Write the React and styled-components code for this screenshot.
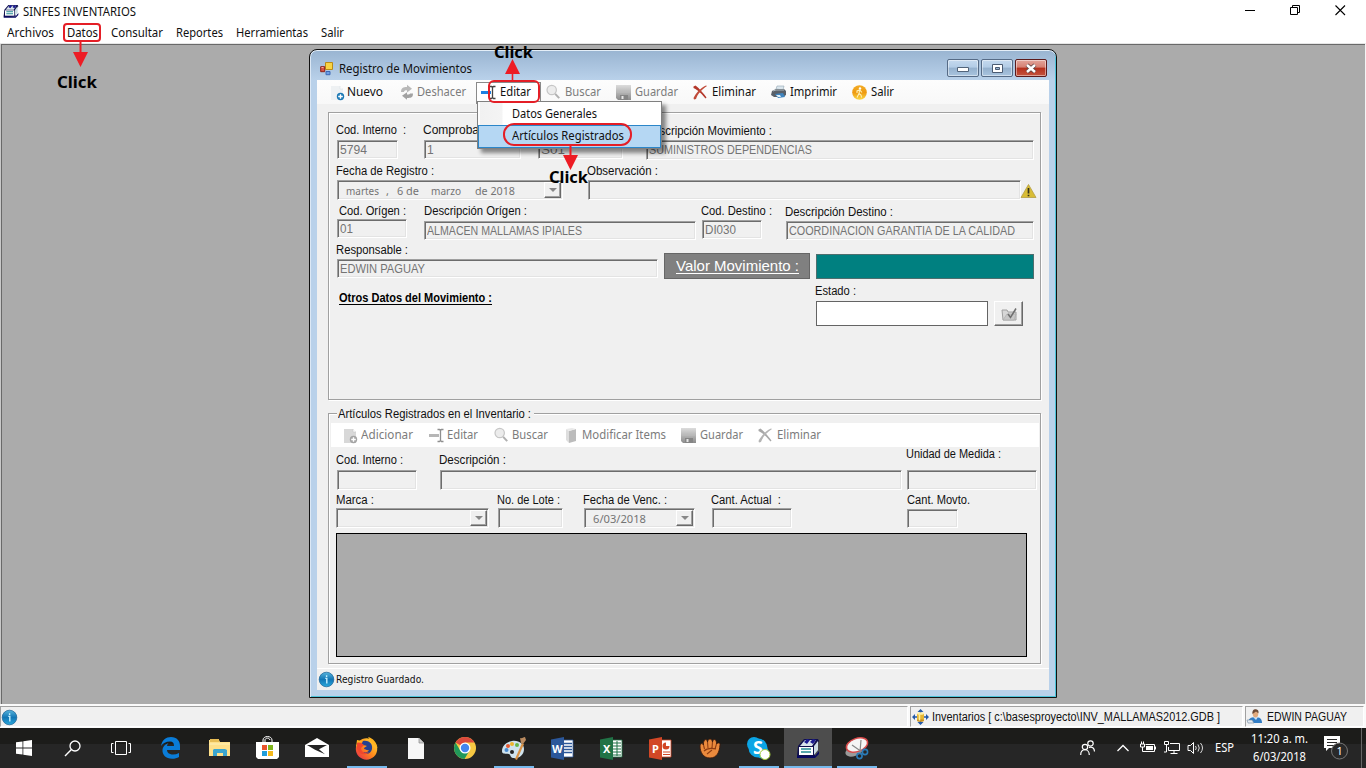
import React, { useLayoutEffect, useRef } from "react";
import styled, { createGlobalStyle, css } from "styled-components";

const GlobalStyle = createGlobalStyle`
  * { box-sizing: border-box; }
  body { margin: 0; overflow: hidden; }
`;

const sans = `"Liberation Sans", Arial, sans-serif`;
const segoe = `"Noto Sans", "Open Sans", sans-serif`;

/* ---------- text ---------- */

const TextSpan = styled.span`
  display: inline-block;
  flex: none;
  align-self: flex-start;
  white-space: pre;
  transform-origin: 0 50%;
`;

/* Condenses or widens the glyphs so the string takes exactly `w` pixels. */
function Text({ w, children }) {
  const ref = useRef(null);
  useLayoutEffect(() => {
    const el = ref.current;
    if (!w || !children) return;
    el.style.transform = "none";
    const natural = el.getBoundingClientRect().width;
    el.style.transform = `scaleX(${((w + 1) / natural).toFixed(4)})`;
    el.style.marginRight = `${(w + 1 - natural).toFixed(3)}px`;
  }, [w, children]);
  return <TextSpan ref={ref}>{children}</TextSpan>;
}

/* ---------- application frame ---------- */

const Desktop = styled.div`
  width: 1366px;
  height: 768px;
  display: flex;
  flex-direction: column;
  position: relative;
  overflow: hidden;
  background: #fff;
  color: #111;
  font: 12px/16px ${segoe};
`;

const TitleBar = styled.header`
  height: 23px;
  display: flex;
  padding: 4px 20px 0 3px;
  justify-content: space-between;
`;

const TitleGroup = styled.div`
  display: flex;
  gap: ${(p) => p.$gap}px;
`;

const MenuBar = styled.nav`
  height: 20px;
  display: flex;
  gap: 13px;
  padding: 2px 0 0 7px;
`;

const Workspace = styled.main`
  height: 661px;
  border-top: 1px solid #e6e6e6;
  border-right: 1px solid #f4f4f4;
  background: #ababab;
  box-shadow: inset 1px 0 #c8c8c8, inset 2px 1px #696969;
  position: relative;
`;

const StatusBar = styled.footer`
  height: 24px;
  display: flex;
  gap: 2px;
  padding-top: 2px;
  background: #fafafa;
`;

const StatusCell = styled.div`
  display: flex;
  gap: ${(p) => p.$gap || 3}px;
  width: ${(p) => p.$w}px;
  height: 21px;
  padding: 2px 0 0 1px;
  border: 1px solid #a0a0a0;
  border-color: #a0a0a0 #fff #fff #a0a0a0;
  background: #f0f0f0;
  font: 12px/17px ${sans};
`;

/* ---------- child window ---------- */

const ChildWindow = styled.section`
  position: absolute;
  left: 309px;
  top: 5px;
  width: 748px;
  height: 649px;
  padding: 0 7px 7px;
  border: 1px solid #111;
  border-radius: 8px 8px 0 0;
  background: linear-gradient(#99b4d1, #b9d1ea 30px);
  box-shadow: inset 0 1px #e4eef8, inset 1px 0 #dce8f5, inset -1px -1px #4cc3d9;
`;

const WindowTitle = styled.div`
  height: 30px;
  display: flex;
  padding: 7px 2px 0 3px;
  line-height: 24px;
  gap: 5px;
`;

const WindowButtons = styled.div`
  display: flex;
  gap: 2px;
  margin-left: auto;
  padding-top: 2px;
`;

const WindowButton = styled.button`
  width: 32px;
  height: 18px;
  padding: 0;
  display: grid;
  place-items: center;
  border: 1px solid ${(p) => (p.$close ? "#5b1a1c" : "#566b86")};
  border-radius: 2px;
  background: ${(p) =>
    p.$close
      ? "linear-gradient(#e3a59b, #d58073 45%, #b52f1c 50%, #c4543f)"
      : "linear-gradient(#c5d9ee, #b3cce6 45%, #94b0cd 50%, #a9c4df)"};
  box-shadow: inset 0 0 0 1px rgba(255, 255, 255, 0.45);
`;

const Client = styled.div`
  height: 610px;
  display: flex;
  flex-direction: column;
  background: #f0f0f0;
`;

const Toolbar = styled.div`
  height: 24px;
  display: flex;
  padding-left: ${(p) => p.$pad}px;
  background: ${(p) => (p.$white ? "#fff" : "linear-gradient(#fdfdfd, #f8f8f8)")};
  margin: ${(p) => p.$margin || "0"};
  font: 12px/16px ${segoe};
`;

const Tool = styled.div`
  display: flex;
  width: ${(p) => p.$w}px;
  height: 24px;
  padding-top: 4px;
  gap: ${(p) => p.$gap ?? 3}px;
  color: ${(p) => (p.$off ? "#7c7c7c" : "#111")};
  line-height: 16px;
  ${(p) =>
    p.$open &&
    css`
      height: 22px;
      margin-top: 2px;
      padding: 1px 0 0 4px;
      background: #fff;
      border: 1px solid #8a8a8a;
      border-bottom: 0;
    `}
`;

const GroupPanel = styled.div`
  margin: ${(p) => p.$margin};
  padding: ${(p) => p.$padding};
  height: ${(p) => p.$h}px;
  min-width: 0;
  border: 1px solid #a0a0a0;
  box-shadow: 1px 1px #fff, inset 1px 1px #fff;
  font: 12px/14px ${sans};
`;

const LegendRow = styled.div`
  height: 14px;
  margin-top: -7px;
  padding-left: 8px;
`;

const Legend = styled.div`
  display: inline-block;
  width: 197px;
  height: 14px;
  background: #f0f0f0;
  padding-left: 1px;
`;

const Row = styled.div`
  display: flex;
  align-items: flex-start;
  height: ${(p) => p.$h}px;
  padding-left: ${(p) => p.$pad || 0}px;
`;

const FieldBox = styled.label`
  display: flex;
  flex-direction: column;
  flex: none;
  width: ${(p) => p.$w}px;
  margin: ${(p) => p.$top || 0}px 0 0 ${(p) => p.$left || 0}px;
`;

const FieldLabel = styled.span`
  display: flex;
  height: 14px;
  margin-left: ${(p) => p.$shift}px;
`;

const UnitLabel = styled(FieldLabel).attrs({ $shift: -1 })`
  margin-top: -6px;
`;

const Sunken = styled.div`
  display: flex;
  height: ${(p) => p.$h || 19}px;
  margin-top: ${(p) => p.$gap}px;
  padding: 1px 0 0 2px;
  border: 1px solid;
  border-color: #a0a0a0 #fff #fff #a0a0a0;
  box-shadow: inset 1px 1px #6c6c6c, inset -1px -1px #e3e3e3;
  background: #f0f0f0;
  color: #747474;
  line-height: 17px;
`;

const DropButton = styled.span`
  display: grid;
  place-items: center;
  width: 17px;
  height: calc(100% - 1px);
  margin: 0 1px 0 auto;
  border: 1px solid;
  border-color: #fff #696969 #696969 #fff;
  box-shadow: inset -1px -1px #a0a0a0;
`;

const DropArrow = styled.i`
  border: 4px solid transparent;
  border-top-color: #888;
  border-bottom: 0;
`;

const DateParts = styled.div`
  display: flex;
  padding-left: 6px;
  font: 11px/18px ${segoe};
`;

const DatePart = styled.span`
  display: flex;
  width: ${(p) => p.$w}px;
`;

const WarningHolder = styled.div`
  margin-top: 20px;
`;

const AmountLabel = styled.div`
  display: flex;
  width: 146px;
  height: 26px;
  margin: 10px 6px 0;
  padding-left: 11px;
  background: #808080;
  border: 1px solid #666;
  color: #fff;
  font: 15px/23px ${sans};
`;

const Underlined = styled.span`
  display: flex;
  height: ${(p) => p.$h}px;
  border-bottom: 1px solid;
`;

const AmountValue = styled.div`
  width: 218px;
  height: 25px;
  margin-top: 11px;
  background: #008080;
  border: 1px solid #4e6e6e;
`;

const SectionTitle = styled.div`
  display: flex;
  width: 479px;
  padding: 7px 0 0 2px;
  font-weight: bold;
  color: #000;
`;

const StateInput = styled.div`
  width: 172px;
  height: 25px;
  margin-top: 3px;
  background: #fff;
  border: 1px solid #646464;
`;

const StateButton = styled.button`
  width: 29px;
  height: 25px;
  margin: 17px 0 0 6px;
  padding: 2px 0 0 2px;
  border: 1px solid;
  border-color: #fff #696969 #696969 #fff;
  box-shadow: inset -1px -1px #a0a0a0;
  background: #f0f0f0;
  display: grid;
  place-items: center;
`;

const Grid = styled.div`
  width: 691px;
  height: 124px;
  margin-left: 7px;
  background: #ababab;
  border: 1px solid #000;
`;

const WindowStatus = styled.div`
  display: flex;
  gap: 2px;
  height: 22px;
  margin-top: auto;
  padding: 2px 0 0 2px;
  border-top: 1px solid #fff;
  font: 10px/18px "DejaVu Sans", sans-serif;
`;

/* ---------- drop-down and callouts, both lie over the form ---------- */

const DropMenu = styled.div`
  position: absolute;
  left: 477px;
  top: 101px;
  width: 185px;
  height: 48px;
  padding: 1px 0 0;
  border: 1px solid #808080;
  background: linear-gradient(90deg, #fcfcfc 2px, #f1f1f1 2px, #f4f4f4 24px, #fff 25px);
  box-shadow: 4px 4px 4px rgba(0, 0, 0, 0.45);
`;

const DropItem = styled.div`
  display: flex;
  height: 22px;
  padding: 3px 0 0 34px;
  ${(p) =>
    p.$active &&
    css`
      height: 23px;
      background: #b5d7f3;
      border: 1px solid #2b86c9;
      padding: 2px 0 0 33px;
    `}
`;

const Highlight = styled.div`
  position: absolute;
  left: ${(p) => p.$x}px;
  top: ${(p) => p.$y}px;
  width: ${(p) => p.$w}px;
  height: ${(p) => p.$h}px;
  border: 2px solid #e41e26;
  border-radius: ${(p) => p.$r}px;
`;

const Arrow = styled.svg`
  position: absolute;
  left: ${(p) => p.$x}px;
  top: ${(p) => p.$y}px;
  fill: #ed1c24;
`;

const ClickLabel = styled.div`
  position: absolute;
  left: ${(p) => p.$x}px;
  top: ${(p) => p.$y}px;
  display: flex;
  font: bold 16px/20px ${segoe};
  color: #000;
`;

/* ---------- taskbar ---------- */

const Taskbar = styled.footer`
  height: 40px;
  display: flex;
  background: linear-gradient(#1c1c1a 16px, #262626 16px);
  color: #fff;
`;

const Task = styled.div`
  width: ${(p) => p.$w || 49}px;
  height: 40px;
  margin-left: ${(p) => (p.$active ? 1 : 0)}px;
  display: grid;
  place-items: center;
  position: relative;
  background: ${(p) => (p.$active ? "#4d4d4d" : "transparent")};
  &::after {
    content: "";
    display: ${(p) => (p.$open || p.$active ? "block" : "none")};
    position: absolute;
    bottom: 0;
    left: ${(p) => (p.$active ? 0 : 5)}px;
    right: ${(p) => (p.$active ? 0 : 4)}px;
    height: 2px;
    background: #76b9ed;
  }
`;

const Tray = styled.div`
  display: flex;
  margin-left: auto;
  height: 40px;
  border-right: 1px solid #666;
  margin-right: 4px;
  align-items: center;
`;

const TrayIcon = styled.div`
  width: ${(p) => p.$w}px;
  display: flex;
  flex: none;
`;

const Clock = styled.div`
  width: 73px;
  display: flex;
  flex-direction: column;
  line-height: 18px;
`;

const ClockLine = styled.div`
  display: flex;
  padding-left: ${(p) => p.$pad || 0}px;
`;

const Svg = styled.svg`
  display: block;
  flex: none;
  overflow: visible;
  margin-top: ${(p) => p.$mt || 0}px;
`;

/* ---------- icons ---------- */

const Icon = ({ w = 16, h = 16, mt, children }) => (
  <Svg width={w} height={h} viewBox={`0 0 ${w} ${h}`} $mt={mt} fill="none">{children}</Svg>
);

const AppIcon = ({ w = 16, h = 16 }) => (
  <Svg width={w} height={h} viewBox="0 0 24 20" fill="none">
    <path d="M1 17 19 18 23 13v3l-4 4H1z" fill="#090963" />
    <path d="M2 8 8 1h14l1 2-4 6v9H1z" fill="#10104e" />
    <path d="M4 8 9 2h11l-4 6z" fill="#d9e5ec" />
    <path d="m8 4 3-3 3 1-3 4zm6 0 3-3 3 1-3 4z" fill="#1b1b91" />
    <path d="M3 9h14v8H3z" fill="#fff" />
    <path d="m18 8 4-5v9l-4 5z" fill="#cbdce3" />
    <path d="M5 11h10M5 14h10" stroke="#238b93" strokeWidth="1.6" />
  </Svg>
);

const InfoIcon = () => (
  <Icon w={15} h={15} mt={1}>
    <defs>
      <linearGradient id="info" x2="0" y2="1"><stop stopColor="#57b4dc" /><stop offset=".5" stopColor="#1276b5" /><stop offset="1" stopColor="#2aa9dc" /></linearGradient>
    </defs>
    <circle cx="7.5" cy="7.5" r="7.3" fill="url(#info)" stroke="#155d92" strokeWidth=".7" />
    <path d="M6.3 6.4h1.5v5M7.6 3.3v1.6" stroke="#c5f0ff" strokeWidth="1.4" />
  </Icon>
);

const FormIcon = () => (
  <Icon w={14} h={14} mt={5}>
    <path d="M5.5.5h7v7h-7z" fill="#f8d444" stroke="#ba8b17" />
    <path d="M.7 4.7h4v5h-4z" fill="#d85446" stroke="#8d2218" />
    <path d="M6 9.5h4v3.2H6z" fill="#6d9fe8" stroke="#3d68b5" />
    <path d="M1.5 5.5h2" stroke="#f7aaa0" />
  </Icon>
);

const NewIcon = ({ off }) => (
  <Icon w={15} h={16} mt={1}>
    <path d="M1 1h9l3 3v11H1z" fill={off ? "#d8d8d8" : "#eef1f3"} />
    <path d="M10 1v3h3" fill="#fff" stroke={off ? "#ccc" : "#dde3e8"} strokeWidth=".7" />
    <circle cx="10.5" cy="11.5" r="3.7" fill={off ? "#a4a4a4" : "#1c79b5"} />
    <path d="M10.5 9.2v4.6M8.2 11.5h4.6" stroke="#fff" strokeWidth="1.4" />
  </Icon>
);

const UndoIcon = () => (
  <Icon w={14} h={16}>
    <path d="M1 8c0-4 2-5 6-5V.8l5 4L7 8.500V6.300C4.500 6.300 4.300 6.800 4 8z" fill="#b9b9b9" />
    <path d="M13 9.500c0 4-2 4.500-6 4.500v1.800l-5-4 5-3.500v2.200c2.500 0 2.700-.2 3-1z" fill="#a2a2a2" />
  </Icon>
);

const EditIcon = ({ off }) => (
  <Icon w={16} h={16}>
    <path d="M0 7h10v3H0z" fill={off ? "#b6b6b6" : "#1d80e2"} />
    <path d="M8.500 2.500h2l1 1 1-1h2M8.500 14.500h2l1-1 1 1h2M11.500 3v11" stroke={off ? "#8f8f8f" : "#444"} strokeWidth="1.3" />
  </Icon>
);

const SearchIcon = () => (
  <Icon w={15} h={16}>
    <circle cx="5.700" cy="6" r="4.700" fill="#ececec" stroke="#c6c6c6" strokeWidth="1.200" />
    <path d="m9.200 9.800 4 4.400" stroke="#b0b0b0" strokeWidth="2" />
  </Icon>
);

const SaveIcon = () => (
  <Icon w={16} h={16} mt={1}>
    <defs><linearGradient id="save" x2="0" y2="1"><stop stopColor="#dcdcdc" /><stop offset="1" stopColor="#8c8c8c" /></linearGradient></defs>
    <path d="M0 0h15v15H2l-2-2z" fill="url(#save)" />
    <path d="M4 10h8v5H4z" fill="#858585" />
    <path d="M5.500 11h2v3h-2z" fill="#e6e6e6" />
    <path d="M1 7h13" stroke="#bcbcbc" />
  </Icon>
);

const DeleteIcon = ({ off }) => (
  <Icon w={16} h={16} mt={1}>
    <path d="M.5 1.500 2.500.5c4 3 8 8 11 12l-1 1C9 9.500 6 5.500.5 3z" fill={off ? "#a8a8a8" : "#b4382b"} />
    <path d="M14 1C9 4.500 4.500 9 3 14l-2 .5-.5-1.500C3 8 7.500 3 13 .5z" fill={off ? "#b4b4b4" : "#c04a39"} />
  </Icon>
);

const PrintIcon = () => (
  <Icon w={16} h={16}>
    <path d="m5 5 1-3h7l-1 4z" fill="#dbe6ed" stroke="#92a6b2" strokeWidth=".6" />
    <path d="m1 7 4-2h8l2 2v4l-3 2H3l-3-2z" fill="#596069" />
    <path d="m2 7 3-1h8" stroke="#aeb8be" />
    <path d="m4 10 8-1 2 4-7 1z" fill="#3f85c0" />
    <path d="m5 11 4 0 1 2-3 0z" fill="#e1f0f8" />
  </Icon>
);

const ExitIcon = () => (
  <Icon w={16} h={16}>
    <defs><linearGradient id="exit" x2="0" y2="1"><stop stopColor="#f3ad28" /><stop offset=".5" stopColor="#ee9a10" /><stop offset="1" stopColor="#fbd844" /></linearGradient></defs>
    <circle cx="7.500" cy="8.500" r="7.300" fill="url(#exit)" />
    <circle cx="8" cy="4.500" r="1.200" fill="#fff" />
    <path d="M7.700 6 7 9.500l2 1.500.5 2.500M7 9.500l-2 4M5 9V7l2.700-1L10 8.500" stroke="#fff3b8" strokeWidth="1.100" />
  </Icon>
);

const ItemIcon = () => (
  <Icon w={12} h={16} mt={1}>
    <path d="m0 1 3 2v12l-3-3z" fill="#dedede" />
    <path d="m3 3 7-2v12l-7 2z" fill="#bcbcbc" />
    <path d="m0 1 6-1 4 1-7 2z" fill="#e9e9e9" />
  </Icon>
);

const WarningIcon = () => (
  <Icon w={16} h={15}>
    <path d="M7.500.5 15 13.500H0z" fill="#d9bd35" stroke="#b39d45" strokeWidth=".8" />
    <path d="M7.500 4v5.500M7.500 10.700v1.500" stroke="#33301c" strokeWidth="1.700" />
  </Icon>
);

const FolderCheckIcon = () => (
  <Icon w={17} h={15}>
    <path d="M1 3h5l1 2h8v8H2z" fill="#d7d7d7" stroke="#a0a0a0" />
    <path d="M6 7h9l-2 6H2z" fill="#c7c7c7" stroke="#a8a8a8" strokeWidth=".6" />
    <path d="m7 7 2.500 3.500L15 1.500" stroke="#6f6f6f" strokeWidth="1.500" />
  </Icon>
);

const DatabaseIcon = () => (
  <Icon w={17} h={16}>
    <path d="m8.500 0 3 3h-6zM8.500 16l3-3h-6zM0 8l3-3v6zM17 8l-3-3v6z" fill="#245aa8" />
    <path d="M1 8h15M8.500 1v14" stroke="#245aa8" strokeWidth="1.500" />
    <path d="M5 4.500h7v7H5z" fill="#e5b634" />
    <ellipse cx="8.500" cy="4.500" rx="3.500" ry="1.300" fill="#fff0a5" />
    <ellipse cx="8.500" cy="11.500" rx="3.500" ry="1.300" fill="#c98f1d" />
    <path d="M7.500 5.500v6" stroke="#fff1a2" strokeWidth="1.500" />
  </Icon>
);

const UserIcon = () => (
  <Icon w={16} h={16}>
    <path d="M1 14c0-4 3-6 7-6 5 0 7 2 7 6z" fill="#317cc4" />
    <path d="m6 8 3 3 2-3" fill="#cce2f4" />
    <ellipse cx="8.500" cy="4.800" rx="2.800" ry="3.700" fill="#e2aa7d" />
    <path d="M5.500 5C5 1 7 0 9 .2c2 .2 3 2 2.400 4L9 2.500z" fill="#6c4a35" />
    <path d="M0 11h5l2 3H1z" fill="#e4eaf0" stroke="#7188a0" strokeWidth=".6" />
  </Icon>
);

const WindowsIcon = () => (
  <Icon w={16} h={16}><path d="M0 2.300 6.500 1.400v6.100H0zM7.300 1.300 16 0v7.500H7.300zM0 8.400h6.500v6.200L0 13.700zM7.300 8.400H16V16l-8.700-1.200z" fill="#fff" /></Icon>
);
const MagnifierIcon = () => (
  <Icon w={17} h={17}><circle cx="11" cy="6" r="5" stroke="#fff" strokeWidth="1.300" /><path d="M7.400 9.600 1 16" stroke="#fff" strokeWidth="1.400" /></Icon>
);
const TaskViewIcon = () => (
  <Icon w={20} h={14}><path d="M4.500.5h11v13h-11zM2.500 2.500h-2v9h2M17.500 2.500h2v9h-2" stroke="#fff" /></Icon>
);
const EdgeIcon = () => (
  <Icon w={21} h={22}>
    <path d="M1 9C2 3 6 0 11 0c6 0 9 4 9 9v4H7c0 3 3 4.500 6 4.500 2 0 4-.5 6-1.500v4c-2 1.200-4 1.800-7 1.800-6 0-10-4-9.500-9C3 9 6 7 8.500 6 7.500 7 7 8 7 9h7c0-3-1-4.600-4-4.600C6 4.400 3 6 1 9z" fill="#0a7cd8" />
  </Icon>
);
const ExplorerIcon = () => (
  <Icon w={22} h={20}>
    <path d="M0 2h10l1 2h10v14H0z" fill="#ffe08a" /><path d="M1 1h9v3H1z" fill="#e8bd55" />
    <path d="M4 18v-6l1-1h11l2 1v6h-4v-3H8v3z" fill="#3aa5cf" /><path d="M0 6h21" stroke="#fff1b8" />
  </Icon>
);
const StoreIcon = () => (
  <Icon w={23} h={24}>
    <path d="M7 7V4c0-2 2-3.500 4.500-3.500S16 2 16 4v3M9 7V4c0-2 4-3 5 0" stroke="#fff" />
    <path d="M0 6h23v15l-2 2H2l-2-2z" fill="#fff" />
    <path d="M6 9h5v5H6z" fill="#e8542c" /><path d="M12 9h5v5h-5z" fill="#7eb51c" /><path d="M6 15h5v5H6z" fill="#1f9ddb" /><path d="M12 15h5v5h-5z" fill="#f5b91b" />
  </Icon>
);
const MailIcon = () => (
  <Icon w={24} h={20}><path d="M0 7 12 0l12 7v12H0z" fill="#fff" /><path d="M2 7h20l-8 4.200 6 5-10-4.500z" fill="#242424" /></Icon>
);
const FirefoxIcon = () => (
  <Icon w={23} h={23}>
    <defs><linearGradient id="fx" x1="1" x2="0" y2="1"><stop stopColor="#ffe63b" /><stop offset=".5" stopColor="#ff8a1b" /><stop offset="1" stopColor="#e6214f" /></linearGradient></defs>
    <circle cx="11.500" cy="12" r="10.700" fill="url(#fx)" />
    <path d="M13 0c5 1 9 6 9.500 11L17 6zM2 3l5 1-6 6z" fill="#ffb31f" />
    <path d="M8 4c5-1 10 2 9 8-1 5-6 6-9 3 3 1 5 0 6-2-2 1-3-1-5-1 0-2 2-2 3-3-2-1-4-1-6-1z" fill="#24418f" />
    <path d="M2 6c2-1 5 0 7 2L6 11c0 4 4 6 8 4-3 4-11 3-12-4z" fill="#f2472c" />
  </Icon>
);
const FileIcon = () => (
  <Icon w={16} h={21}><path d="M0 0h11l5 5v16H0z" fill="#f7f7f7" /><path d="M11 0v5h5" fill="#ccc" stroke="#888" strokeWidth=".7" /></Icon>
);
const ChromeIcon = () => (
  <Icon w={22} h={22}>
    <circle cx="11" cy="11" r="11" fill="#f7c842" />
    <path d="M11 11 1.500 5.500A11 11 0 0 1 20.500 5.500H11z" fill="#dc4a3d" />
    <path d="M1.500 5.500A11 11 0 0 0 10.500 22l5-8.500L6.500 14z" fill="#21985a" />
    <circle cx="11" cy="11" r="5.500" fill="#fff" /><circle cx="11" cy="11" r="4.200" fill="#4486ef" />
  </Icon>
);
const PaintIcon = () => (
  <Icon w={24} h={23}>
    <path d="M10 4c7-1 12 3 12 8 0 6-5 10-11 9-3-.5-2-3-4-4-3-1-7 1-7-3C0 9 4 5 10 4z" fill="#cfe3ee" />
    <circle cx="4.500" cy="13" r="2" fill="#4a8bd0" /><circle cx="6" cy="9" r="2" fill="#e45a32" /><circle cx="10" cy="7" r="2" fill="#efb52c" /><circle cx="15" cy="8" r="2" fill="#66b74b" /><circle cx="10" cy="15" r="2" fill="#222" />
    <path d="m20 6 2 1-7 16-2-1z" fill="#d89347" /><path d="M18 1c2 1 3-1 5-1l1 3-3 4-2-1z" fill="#b98a5f" />
  </Icon>
);

const OfficeText = styled.text`
  font: bold 11px ${segoe};
  fill: #fff;
`;
const OfficeIcon = ({ color, letter, kind }) => (
  <Icon w={23} h={23}>
    <path d="M11 3h11v17H11z" fill="#fff" stroke={color} strokeWidth=".8" />
    {kind === "lines" && <path d="M13 6.500h8M13 9.500h8M13 12.500h8M13 15.500h8" stroke={color} strokeWidth="1.300" />}
    {kind === "table" && <path d="M13 6h8M13 9h8M13 12h8M13 15h8M13 18h8M17 4v15" stroke={color} />}
    {kind === "pie" && <><path d="M17 5.500a3.500 3.500 0 1 0 3.500 3.500H17z" fill={color} /><path d="M14 15h7M14 17.500h7" stroke={color} /></>}
    <path d="M0 2.500 13 0v23L0 20.500z" fill={color} />
    <OfficeText x={letter === "W" ? 1 : 3} y="15.500">{letter}</OfficeText>
  </Icon>
);
const FistIcon = () => (
  <Icon w={22} h={21}>
    <path d="M1 8c0-3 3-3 3.500-1C4 1 8 0 8.500 4 9 0 13 0 13.500 4 14 0 18 1 17.500 6c2-2 4-1 3.500 1-.5 7-3 13-10 13C4 20 1 14 1 8z" fill="#ea8a3d" stroke="#3c1a0b" strokeWidth=".9" />
    <path d="M4.500 7l1 4M8.500 4l.5 6M13.500 4 13 10M17.500 6 16 11M5 13c3-3 8-3 12-2M8 16l5-4" stroke="#8f3d12" strokeWidth="1.100" />
  </Icon>
);
const SkypeText = styled.text`
  font: bold 18px ${segoe};
  fill: #fff;
`;
const SkypeIcon = () => (
  <Icon w={24} h={23}>
    <circle cx="7" cy="7" r="7" fill="#0ba5e5" /><circle cx="15" cy="15" r="6.500" fill="#0ba5e5" /><circle cx="11" cy="11" r="9.500" fill="#0ba5e5" />
    <SkypeText x="6" y="17">S</SkypeText>
    <circle cx="18" cy="17.500" r="5" fill="#fff" stroke="#a5cf3a" />
  </Icon>
);
const SnipIcon = () => (
  <Icon w={24} h={23}>
    <ellipse cx="9" cy="14" rx="9" ry="5" fill="#9a9a9a" transform="rotate(-20 9 14)" />
    <ellipse cx="12" cy="8" rx="11" ry="6.500" fill="#f5f5f5" stroke="#d94b4b" strokeWidth="1.500" transform="rotate(-20 12 8)" />
    <path d="m7 8 10 7M16 3l-1 12" stroke="#888" strokeWidth="1.200" />
    <circle cx="14.500" cy="19" r="2.600" stroke="#2a7bb8" strokeWidth="1.600" /><circle cx="20" cy="15" r="2.600" stroke="#2a7bb8" strokeWidth="1.600" />
  </Icon>
);

const PeopleIcon = () => (
  <Icon w={16} h={16}><circle cx="5" cy="7" r="2.700" stroke="#fff" strokeWidth="1.200" /><path d="M.7 15c0-7 8.600-7 8.600 0" stroke="#fff" strokeWidth="1.200" /><circle cx="10.500" cy="3.500" r="2.700" stroke="#fff" strokeWidth="1.200" /><path d="M9 7.500c4-1 5.300 1 5.500 4" stroke="#fff" strokeWidth="1.200" /></Icon>
);
const ChevronIcon = () => <Icon w={12} h={8}><path d="m.5 7 5.500-5.500L11.500 7" stroke="#fff" strokeWidth="1.300" /></Icon>;
const BatteryIcon = () => (
  <Icon w={16} h={14}><path d="M5.500 3.500h9v7h-9" stroke="#fff" /><path d="M6 5h7v4H6zM15 5.500h1v3h-1z" fill="#fff" /><path d="M.5 3h4v3h-4zM1.500.5V3M3.500.5V3M2.500 6v4.500H6" stroke="#fff" /></Icon>
);
const NetworkIcon = () => (
  <Icon w={16} h={14}><path d="M6 2.500h9.500v7H4.500V6M10 10v2.500M6.500 12.500h7M.5.500h4v3h-4zM2.500 4v7H0" stroke="#fff" /></Icon>
);
const VolumeIcon = () => (
  <Icon w={17} h={14}><path d="M1 4.500h2.500l3-3v11l-3-3H1z" stroke="#fff" /><path d="M8.500 5q1.500 2 0 4M11 3.500q2.500 3.500 0 7M13.500 2q4 5 0 10" stroke="#ddd" /></Icon>
);
const BadgeText = styled.text`
  font: 11px ${segoe};
  fill: #fff;
`;
const NotificationIcon = () => (
  <Icon w={24} h={24}>
    <path d="M0 0h16v12H5l-3 3v-3H0z" fill="#fff" /><path d="M3 3.500h10M3 6.500h10M3 9.500h7" stroke="#282828" />
    <circle cx="15.500" cy="15" r="8" fill="#292929" stroke="#777" /><BadgeText x="12.500" y="19">1</BadgeText>
  </Icon>
);

/* ---------- composed parts ---------- */

function Field({ label, lw, w, left, top, shift = -1, gap = 3, h, value, vw, children }) {
  return (
    <FieldBox $w={w} $left={left} $top={top}>
      <FieldLabel $shift={shift}>{label && <Text w={lw}>{label}</Text>}</FieldLabel>
      <Sunken $gap={gap} $h={h}>
        {value && <Text w={vw}>{value}</Text>}
        {children}
      </Sunken>
    </FieldBox>
  );
}

const Drop = () => <DropButton><DropArrow /></DropButton>;

const menus = [["Archivos", 46], ["Datos", 30], ["Consultar", 51], ["Reportes", 46], ["Herramientas", 71], ["Salir", 22]];

const pinned = [
  [WindowsIcon, 48], [MagnifierIcon, 48], [TaskViewIcon, 49], [EdgeIcon, 51], [ExplorerIcon, 47], [StoreIcon, 49], [MailIcon, 50],
];

function MovementsWindow() {
  return (
    <ChildWindow>
      <WindowTitle>
        <FormIcon />
        <Text w={132}>Registro de Movimientos</Text>
        <WindowButtons>
          <WindowButton><Icon w={12} h={6} mt={3}><path d="M.5.500h11v4H.5z" fill="#fff" stroke="#52647a" /></Icon></WindowButton>
          <WindowButton><Icon w={11} h={9}><path d="M.5.500h10v8H.5z" fill="#fff" stroke="#4b5b72" /><path d="M3.500 3.500h4v2h-4z" fill="#99b4d1" stroke="#4b5b72" /></Icon></WindowButton>
          <WindowButton $close><Icon w={12} h={9}><path d="m2 1 8 7M10 1 2 8" stroke="#5a4344" strokeWidth="4.200" /><path d="m2 1 8 7M10 1 2 8" stroke="#fff" strokeWidth="2.500" /></Icon></WindowButton>
        </WindowButtons>
      </WindowTitle>
      <Client>
        <Toolbar $pad={13}>
          <Tool $w={70} $gap={2}><NewIcon /><Text w={35}>Nuevo</Text></Tool>
          <Tool $w={76} $off><UndoIcon /><Text w={48}>Deshacer</Text></Tool>
          <Tool $w={65} $open><EditIcon /><Text w={30}>Editar</Text></Tool>
          <Tool $w={75} $off $gap={4}><Svg width="1" height="1" /><SearchIcon /><Text w={35}>Buscar</Text></Tool>
          <Tool $w={77} $off><SaveIcon /><Text w={42}>Guardar</Text></Tool>
          <Tool $w={78}><DeleteIcon /><Text w={43}>Eliminar</Text></Tool>
          <Tool $w={81}><PrintIcon /><Text w={46}>Imprimir</Text></Tool>
          <Tool $w={60}><ExitIcon /><Text w={22}>Salir</Text></Tool>
        </Toolbar>

        <GroupPanel $margin="8px 8px 0 11px" $padding="10px 0 0 8px" $h={288}>
          <Row $h={41}>
            <Field label="Cod. Interno  :" lw={69} w={61} value="5794" vw={26} />
            <Field label="Comprobante" w={97} left={26} value="1" />
            <Field w={85} left={17} value="S01" vw={23} />
            <Field label="Descripción Movimiento :" lw={126} w={388} left={23} top={1} gap={2} h={20} value="SUMINISTROS DEPENDENCIAS" vw={162} />
          </Row>
          <Row $h={40}>
            <Field label="Fecha de Registro :" lw={97} w={226} gap={2} h={20}>
              <DateParts>
                <DatePart $w={40}><Text w={32}>martes</Text></DatePart>
                <DatePart $w={11}><Text>,</Text></DatePart>
                <DatePart $w={34}><Text w={21}>6 de</Text></DatePart>
                <DatePart $w={44}><Text w={29}>marzo</Text></DatePart>
                <DatePart $w={40}><Text w={39}>de 2018</Text></DatePart>
              </DateParts>
              <Drop />
            </Field>
            <Field label="Observación :" lw={70} w={433} left={25} gap={2} h={20} />
            <WarningHolder><WarningIcon /></WarningHolder>
          </Row>
          <Row $h={39}>
            <Field label="Cod. Orígen :" lw={66} w={70} shift={2} gap={1} value="01" vw={12} />
            <Field label="Descripción Orígen :" lw={102} w={272} left={17} shift={0} value="ALMACEN MALLAMAS IPIALES" vw={154} />
            <Field label="Cod. Destino :" lw={70} w={60} left={6} gap={2} value="DI030" vw={30} />
            <Field label="Descripción Destino :" lw={107} w={248} left={24} top={1} gap={2} value="COORDINACION GARANTIA DE LA CALIDAD" vw={225} />
          </Row>
          <Row $h={41}>
            <Field label="Responsable :" lw={71} w={321} gap={2} value="EDWIN PAGUAY" vw={84} />
            <AmountLabel><Underlined $h={20}><Text w={122}>Valor Movimiento :</Text></Underlined></AmountLabel>
            <AmountValue />
          </Row>
          <Row $h={50}>
            <SectionTitle><Underlined $h={14}><Text w={152}>Otros Datos del Movimiento :</Text></Underlined></SectionTitle>
            <FieldBox $w={172}>
              <FieldLabel $shift={-1}><Text w={40}>Estado :</Text></FieldLabel>
              <StateInput />
            </FieldBox>
            <StateButton><FolderCheckIcon /></StateButton>
          </Row>
        </GroupPanel>

        <GroupPanel $margin="13px 8px 0 11px" $padding="0" $h={251}>
          <LegendRow><Legend><Text w={192}>Artículos Registrados en el Inventario :</Text></Legend></LegendRow>
          <Toolbar $white $pad={12} $margin="2px 1px 6px 2px">
            <Tool $w={86} $off><NewIcon off /><Text w={51}>Adicionar</Text></Tool>
            <Tool $w={65} $off $gap={2}><EditIcon off /><Text w={30}>Editar</Text></Tool>
            <Tool $w={72} $off><SearchIcon /><Text w={35}>Buscar</Text></Tool>
            <Tool $w={115} $off $gap={4}><ItemIcon /><Text w={83}>Modificar Items</Text></Tool>
            <Tool $w={77} $off><SaveIcon /><Text w={42}>Guardar</Text></Tool>
            <Tool $w={78} $off><DeleteIcon off /><Text w={43}>Eliminar</Text></Tool>
          </Toolbar>
          <Row $h={40} $pad={8}>
            <Field label="Cod. Interno :" lw={66} w={80} h={20} />
            <Field label="Descripción :" lw={66} w={462} left={23} h={20} />
            <FieldBox $w={130} $left={5}>
              <UnitLabel><Text w={94}>Unidad de Medida :</Text></UnitLabel>
              <Sunken $gap={9} $h={20} />
            </FieldBox>
          </Row>
          <Row $h={40} $pad={7}>
            <Field label="Marca :" lw={37} w={153} shift={0} gap={1} h={20}><Drop /></Field>
            <Field label="No. de Lote :" lw={62} w={65} left={9} gap={1} h={20} />
            <Field label="Fecha de Venc. :" lw={83} w={111} left={21} gap={1} h={20}>
              <DateParts><Text w={52}>6/03/2018</Text></DateParts><Drop />
            </Field>
            <Field label="Cant. Actual  :" lw={69} w={80} left={17} gap={1} h={20} />
            <Field label="Cant. Movto." lw={62} w={51} left={115} gap={2} shift={0} />
          </Row>
          <Grid />
        </GroupPanel>

        <WindowStatus><InfoIcon /><Text w={87}>Registro Guardado.</Text></WindowStatus>
      </Client>
    </ChildWindow>
  );
}

function Callouts() {
  return (
    <>
      <Highlight $x={63} $y={23} $w={38} $h={19} $r={4} />
      <Arrow $x={73} $y={41} width="15" height="26"><path d="M6.500 0h2v11H15L7.500 26 0 11h6.500z" /></Arrow>
      <ClickLabel $x={57} $y={72}><Text w={39}>Click</Text></ClickLabel>
      <Highlight $x={488} $y={80} $w={52} $h={23} $r={6} />
      <Arrow $x={505} $y={59} width="15" height="22"><path d="M6.700 22V15H0L7.500 0 15 15H8.300v7z" /></Arrow>
      <ClickLabel $x={494} $y={42}><Text w={38}>Click</Text></ClickLabel>
      <Highlight $x={503} $y={123} $w={129} $h={23} $r={11} />
      <Arrow $x={563} $y={145} width="15" height="25"><path d="M6.500 0h2v10H15L7.500 25 0 10h6.500z" /></Arrow>
      <ClickLabel $x={549} $y={167}><Text w={38}>Click</Text></ClickLabel>
    </>
  );
}

export default function App() {
  return (
    <Desktop>
      <GlobalStyle />
      <TitleBar>
        <TitleGroup $gap={4}><AppIcon w={16} h={14} /><Text w={112}>SINFES INVENTARIOS</Text></TitleGroup>
        <TitleGroup $gap={35}>
          <Icon w={10} h={10} mt={1}><path d="M0 5.500h10" stroke="#000" /></Icon>
          <Icon w={10} h={10} mt={1}><path d="M.5 2.500h7v7h-7zM2.500 2V.5h7v7H8" stroke="#000" /></Icon>
          <Icon w={11} h={11} mt={1}><path d="m.5.500 9.500 9.500M10 .5.500 10" stroke="#000" strokeWidth="1.100" /></Icon>
        </TitleGroup>
      </TitleBar>
      <MenuBar>{menus.map(([name, w]) => <Text key={name} w={w}>{name}</Text>)}</MenuBar>
      <Workspace><MovementsWindow /></Workspace>
      <StatusBar>
        <StatusCell $w={908}><InfoIcon /></StatusCell>
        <StatusCell $w={333}><DatabaseIcon /><Text w={287}>{"Inventarios [ c:\\basesproyecto\\INV_MALLAMAS2012.GDB ]"}</Text></StatusCell>
        <StatusCell $w={119} $gap={4}><UserIcon /><Text w={79}>EDWIN PAGUAY</Text></StatusCell>
      </StatusBar>
      <Taskbar>
        {pinned.map(([Glyph, w], i) => <Task key={i} $w={w}><Glyph /></Task>)}
        <Task $open><FirefoxIcon /></Task>
        <Task><FileIcon /></Task>
        <Task><ChromeIcon /></Task>
        <Task $open><PaintIcon /></Task>
        <Task><OfficeIcon color="#2b579a" letter="W" kind="lines" /></Task>
        <Task><OfficeIcon color="#217346" letter="X" kind="table" /></Task>
        <Task><OfficeIcon color="#d24726" letter="P" kind="pie" /></Task>
        <Task><FistIcon /></Task>
        <Task $open><SkypeIcon /></Task>
        <Task $w={48} $active><AppIcon w={24} h={20} /></Task>
        <Task $open><SnipIcon /></Task>
        <Tray>
          <TrayIcon $w={37}><PeopleIcon /></TrayIcon>
          <TrayIcon $w={23}><ChevronIcon /></TrayIcon>
          <TrayIcon $w={24}><BatteryIcon /></TrayIcon>
          <TrayIcon $w={23}><NetworkIcon /></TrayIcon>
          <TrayIcon $w={28}><VolumeIcon /></TrayIcon>
          <TrayIcon $w={36}><Text w={18}>ESP</Text></TrayIcon>
          <Clock>
            <ClockLine><Text w={56}>11:20 a. m.</Text></ClockLine>
            <ClockLine $pad={2}><Text w={52}>6/03/2018</Text></ClockLine>
          </Clock>
          <TrayIcon $w={37}><NotificationIcon /></TrayIcon>
        </Tray>
      </Taskbar>
      <DropMenu>
        <DropItem><Text w={84}>Datos Generales</Text></DropItem>
        <DropItem $active><Text w={111}>Artículos Registrados</Text></DropItem>
      </DropMenu>
      <Callouts />
    </Desktop>
  );
}
